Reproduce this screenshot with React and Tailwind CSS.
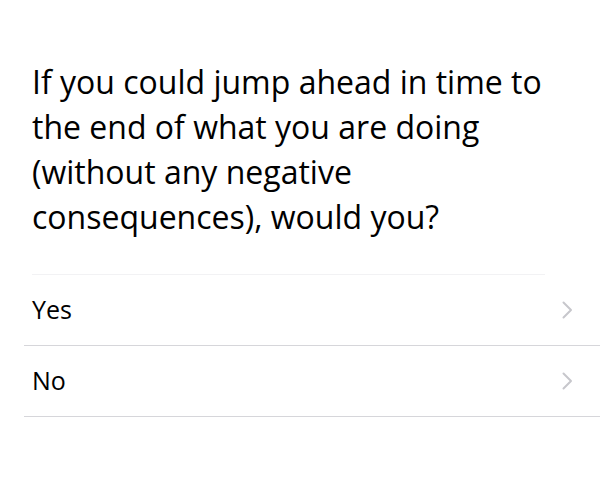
const OPTIONS = ["Yes", "No"];

const TITLE = [
  "If you could jump ahead in time to",
  "the end of what you are doing",
  "(without any negative",
  "consequences), would you?",
];

function Chevron() {
  return (
    <svg width="11" height="18" viewBox="0 0 11 18" fill="none">
      <path d="M1.5 1.5 L9 9 L1.5 16.5" stroke="#c7c7cc" strokeWidth="2" strokeLinecap="round" strokeLinejoin="round" />
    </svg>
  );
}

function OptionRow({ label }) {
  return (
    <div className="flex items-center justify-between h-[71px] pl-[8px] pr-[27px] border-b border-[#d6d6da]">
      <span className="text-[25px] text-black">{label}</span>
      <Chevron />
    </div>
  );
}

export default function App() {
  return (
    <div className="w-[600px] h-[485px] bg-white font-['Open_Sans',sans-serif] overflow-hidden">
      <div className="pt-[59px] px-[32px]">
        <h1 className="text-[32px] leading-[45px] text-black font-normal">
          {TITLE.map((l) => (
            <div key={l} className="whitespace-nowrap">{l}</div>
          ))}
        </h1>
        <div className="mt-[35px] h-px bg-[#f2f2f4] mr-[23px]" />
      </div>
      <div className="ml-[24px]">
        {OPTIONS.map((o) => (
          <OptionRow key={o} label={o} />
        ))}
      </div>
    </div>
  );
}
